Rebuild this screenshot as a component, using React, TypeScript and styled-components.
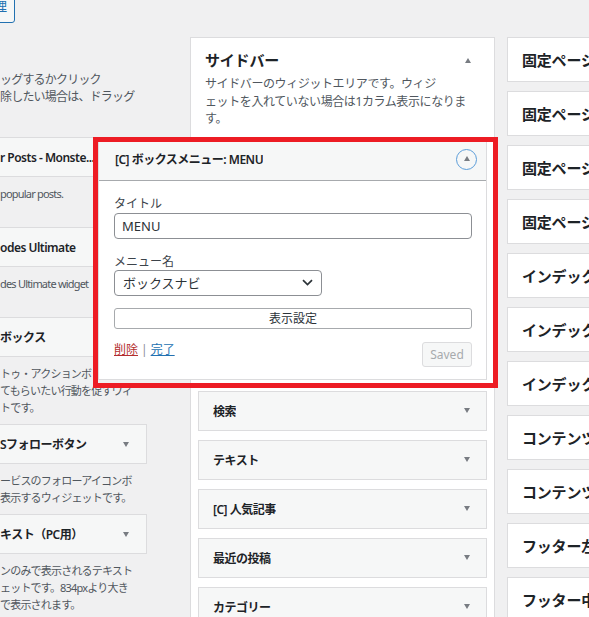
import React from "react";
import styled, { createGlobalStyle, css } from "styled-components";

const Global = createGlobalStyle`
  html, body { margin: 0; padding: 0; background: #f0f0f1; }
  body {
    font-family: "Noto Sans", "Noto Sans CJK JP", sans-serif;
    font-size: 12px;
    color: #3c434a;
  }
  * { box-sizing: border-box; }
`;

const Page = styled.div`
  position: relative;
  width: 589px;
  height: 617px;
  overflow: hidden;
  background: #f0f0f1;
`;

const TopBar = styled.div`
  height: 23px;
  display: flex;
  align-items: flex-end;
`;

const ManageButton = styled.div`
  margin-left: -30px;
  height: 31px;
  display: flex;
  align-items: center;
  padding: 0 7px 4px 10px;
  border: 1px solid #2271b1;
  border-radius: 3px;
  color: #2271b1;
  font-size: 13px;
  background: #f6f7f7;
  white-space: nowrap;
`;

const Columns = styled.div`
  display: flex;
  align-items: flex-start;
  margin-top: 14px;
`;

const LeftCol = styled.div`
  flex: 0 0 163px;
  width: 163px;
  margin-left: -16px;
  padding-top: 34px;
`;

const Intro = styled.div`
  padding-left: 16px;
  line-height: 17px;
  font-size: 12px;
  letter-spacing: -0.8px;
  color: #50575e;
  white-space: nowrap;
  margin-bottom: 32px;
`;

const Caret = styled.span<{ $up?: boolean }>`
  flex-shrink: 0;
  width: 0;
  height: 0;
  border-left: 3.5px solid transparent;
  border-right: 3.5px solid transparent;
  ${(p) =>
    p.$up
      ? css`border-bottom: 5px solid #787c82;`
      : css`border-top: 5px solid #787c82;`}
`;

const WidgetTop = styled.div`
  height: 40px;
  display: flex;
  align-items: center;
  justify-content: space-between;
  background: #f6f7f7;
  border: 1px solid #dcdcde;
  padding: 0 17px 0 15px;
  overflow: hidden;
`;

const WidgetTitle = styled.span`
  font-size: 12px;
  font-weight: 600;
  letter-spacing: -0.5px;
  color: #1d2327;
  white-space: nowrap;
  overflow: hidden;
`;

const WidgetDesc = styled.div<{ $lines: number }>`
  padding: 8px 0 8px 16px;
  min-height: ${(p) => 16 + p.$lines * 17}px;
  line-height: 17px;
  font-size: 11px;
  letter-spacing: -0.8px;
  color: #50575e;
  white-space: nowrap;
  overflow: hidden;
`;

const SidebarCol = styled.div`
  flex: 0 0 305px;
  width: 305px;
  margin-left: 43px;
  min-height: 640px;
  background: #fff;
  border: 1px solid #dcdcde;
`;

const SidebarHeader = styled.div`
  display: flex;
  align-items: center;
  justify-content: space-between;
  padding: 11px 23px 0 14px;
`;

const SidebarName = styled.h2`
  margin: 0;
  font-size: 15px;
  line-height: 22px;
  font-weight: 700;
  letter-spacing: -0.2px;
  color: #1d2327;
`;

const SidebarDesc = styled.div`
  padding: 4px 14px 0 14px;
  line-height: 17.5px;
  font-size: 12px;
  letter-spacing: -0.4px;
  color: #50575e;
  white-space: nowrap;
`;

const WidgetList = styled.div`
  padding: 10px 7px 0 7px;
`;

const OpenWidget = styled.div`
  position: relative;
  z-index: 1;
  margin-left: -100px;
  margin-bottom: 11px;
  background: #fff;
  border: 1px solid #dcdcde;
`;

const OpenTop = styled.div`
  height: 42px;
  display: flex;
  align-items: center;
  justify-content: space-between;
  padding: 0 9px 0 16px;
  background: #f6f7f7;
  border-bottom: 1px solid #a7aaad;
`;

const Toggle = styled.span`
  width: 21px;
  height: 21px;
  border-radius: 50%;
  border: 1.5px solid #5b9dd9;
  display: flex;
  align-items: center;
  justify-content: center;
  padding-bottom: 1px;
`;

const OpenBody = styled.div`
  padding: 14px 14px 12px 15px;
`;

const FieldLabel = styled.div<{ $gap?: number }>`
  margin-top: ${(p) => p.$gap ?? 0}px;
  line-height: 17px;
  font-size: 12px;
  color: #3c434a;
`;

const TextInput = styled.div`
  margin-top: 1px;
  height: 26px;
  display: flex;
  align-items: center;
  padding: 0 7px;
  border: 1px solid #8c8f94;
  border-radius: 4px;
  font-size: 13px;
  color: #2c3338;
  background: #fff;
`;

const SelectBox = styled.div`
  width: 208px;
  height: 26px;
  display: flex;
  align-items: center;
  justify-content: space-between;
  padding: 0 8px 0 8px;
  border: 1px solid #8c8f94;
  border-radius: 4px;
  font-size: 13px;
  color: #2c3338;
  background: #fff;
`;

const WideButton = styled.div`
  margin-top: 12px;
  height: 21px;
  display: flex;
  align-items: center;
  justify-content: center;
  border: 1px solid #a7aaad;
  border-radius: 3px;
  background: #fff;
  font-size: 12px;
  color: #2c3338;
`;

const Footer = styled.div`
  margin-top: 12px;
  display: flex;
  justify-content: space-between;
  align-items: flex-start;
`;

const Links = styled.div`
  line-height: 17px;
  font-size: 12px;
  color: #8c8f94;
  display: flex;
  gap: 3px;
`;

const LinkText = styled.a<{ $danger?: boolean }>`
  color: ${(p) => (p.$danger ? "#b32d2e" : "#2271b1")};
  text-decoration: underline;
  cursor: pointer;
`;

const SavedButton = styled.div`
  margin-top: 1px;
  width: 50px;
  height: 25px;
  display: flex;
  align-items: center;
  justify-content: center;
  border: 1px solid #dcdcde;
  border-radius: 3px;
  background: #f6f7f7;
  color: #a7aaad;
  font-size: 12px;
`;

const SideWidget = styled(WidgetTop)`
  margin-bottom: 9px;
  padding: 0 16px 0 14px;
`;

const RightCol = styled.div`
  flex: 0 0 220px;
  margin-left: 12px;
`;

const AreaBox = styled.div`
  height: 45px;
  margin-bottom: 9px;
  display: flex;
  align-items: center;
  padding-left: 14px;
  background: #fff;
  border: 1px solid #dcdcde;
  overflow: hidden;
`;

const AreaTitle = styled.h2`
  margin: 0;
  font-size: 15px;
  font-weight: 700;
  letter-spacing: -0.2px;
  color: #1d2327;
  white-space: nowrap;
`;

const Highlight = styled.div`
  position: absolute;
  left: 93px;
  top: 137px;
  width: 405px;
  height: 251px;
  border: 5px solid #ed1c24;
  pointer-events: none;
  z-index: 5;
`;

const available = [
  { title: "r Posts - Monste...", desc: ["popular posts.", ""] },
  { title: "odes Ultimate", desc: ["des Ultimate widget", ""] },
  { title: "ボックス", desc: [" トゥ・アクションボックス", "てもらいたい行動を促すウィ", "トです。"] },
  { title: "Sフォローボタン", desc: ["ービスのフォローアイコンボ", "表示するウィジェットです。"] },
  { title: "キスト（PC用）", desc: ["ンのみで表示されるテキスト", "ェットです。834pxより大き", "で表示されます。"] },
];

const sidebarWidgets = ["検索", "テキスト", "[C] 人気記事", "最近の投稿", "カテゴリー", "アーカイブ"];

const areas = [
  "固定ページ上部",
  "固定ページ本文上",
  "固定ページ本文下",
  "固定ページSNSボタン上",
  "インデックストップ広告",
  "インデックスミドル広告",
  "インデックスボトム広告",
  "コンテンツ上部",
  "コンテンツ下部",
  "フッター左",
  "フッター中央",
];

const Chevron = () => (
  <svg width="11" height="7" viewBox="0 0 11 7" aria-hidden="true">
    <path d="M1 1.2 L5.5 5.5 L10 1.2" fill="none" stroke="#2c3338" strokeWidth="1.7" />
  </svg>
);

export default function App() {
  return (
    <Page>
      <Global />
      <TopBar>
        <ManageButton>管理</ManageButton>
      </TopBar>
      <Columns>
        <LeftCol>
          <Intro>
            ッグするかクリック
            <br />
            除したい場合は、ドラッグ
          </Intro>
          {available.map((w) => (
            <div key={w.title}>
              <WidgetTop>
                <WidgetTitle>{w.title}</WidgetTitle>
                <Caret />
              </WidgetTop>
              <WidgetDesc $lines={w.desc.length}>
                {w.desc.map((l, i) => (
                  <React.Fragment key={i}>
                    {l}
                    {i < w.desc.length - 1 && <br />}
                  </React.Fragment>
                ))}
              </WidgetDesc>
            </div>
          ))}
        </LeftCol>

        <SidebarCol>
          <SidebarHeader>
            <SidebarName>サイドバー</SidebarName>
            <Caret $up />
          </SidebarHeader>
          <SidebarDesc>
            サイドバーのウィジットエリアです。ウィジ
            <br />
            ェットを入れていない場合は1カラム表示になりま
            <br />
            す。
          </SidebarDesc>
          <WidgetList>
            <OpenWidget>
              <OpenTop>
                <WidgetTitle>[C] ボックスメニュー: MENU</WidgetTitle>
                <Toggle>
                  <Caret $up />
                </Toggle>
              </OpenTop>
              <OpenBody>
                <FieldLabel>タイトル</FieldLabel>
                <TextInput>MENU</TextInput>
                <FieldLabel $gap={14}>メニュー名</FieldLabel>
                <SelectBox>
                  <span>ボックスナビ</span>
                  <Chevron />
                </SelectBox>
                <WideButton>表示設定</WideButton>
                <Footer>
                  <Links>
                    <LinkText $danger>削除</LinkText>
                    <span>|</span>
                    <LinkText>完了</LinkText>
                  </Links>
                  <SavedButton>Saved</SavedButton>
                </Footer>
              </OpenBody>
            </OpenWidget>
            {sidebarWidgets.map((t) => (
              <SideWidget key={t}>
                <WidgetTitle>{t}</WidgetTitle>
                <Caret />
              </SideWidget>
            ))}
          </WidgetList>
        </SidebarCol>

        <RightCol>
          {areas.map((a) => (
            <AreaBox key={a}>
              <AreaTitle>{a}</AreaTitle>
            </AreaBox>
          ))}
        </RightCol>
      </Columns>
      <Highlight />
    </Page>
  );
}
